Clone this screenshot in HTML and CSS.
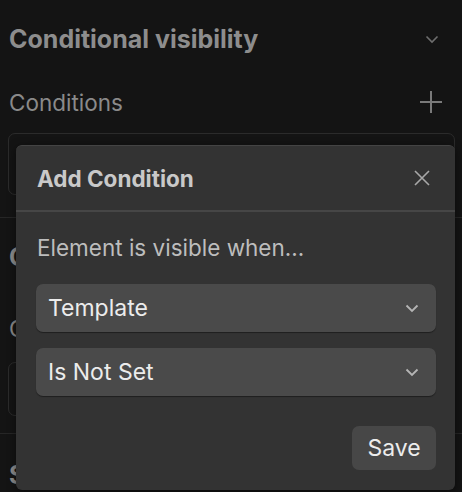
FILE: index.html
```html
<!DOCTYPE html>
<html>
<head>
<meta charset="utf-8">
<link rel="stylesheet" href="styles.css">
</head>
<body>
<div class="panel">
  <section class="section">
    <div class="section-head">
      <span class="section-title">Conditional visibility</span>
      <svg class="chev-head" width="14" height="9" viewBox="0 0 14 9"><path d="M1.5 1.5 L7 7 L12.5 1.5" fill="none" stroke="#6e6e6e" stroke-width="1.6"/></svg>
    </div>
    <div class="row-label">
      <span class="label">Conditions</span>
      <svg class="plus" width="24" height="24" viewBox="0 0 24 24"><path d="M12 1 V23 M1 12 H23" stroke="#7a7a7a" stroke-width="2" fill="none"/></svg>
    </div>
    <div class="box"></div>
  </section>
  <section class="section second">
    <div class="section-head"><span class="section-title">Custom attributes</span></div>
    <div class="row-label"><span class="label">Content</span></div>
    <div class="box"></div>
  </section>
  <section class="section third">
    <div class="section-head"><span class="section-title">Settings</span></div>
  </section>

  <div class="modal">
    <div class="modal-head">
      <span class="modal-title">Add Condition</span>
      <svg class="close" width="18" height="18" viewBox="0 0 18 18"><path d="M2 2 L16 16 M16 2 L2 16" stroke="#a8a8a8" stroke-width="1.6" fill="none"/></svg>
    </div>
    <div class="modal-body">
      <div class="hint">Element is visible when...</div>
      <div class="select"><span>Template</span><svg width="14" height="9" viewBox="0 0 14 9"><path d="M1.5 1.5 L7 7 L12.5 1.5" fill="none" stroke="#b5b5b5" stroke-width="1.8"/></svg></div>
      <div class="select"><span>Is Not Set</span><svg width="14" height="9" viewBox="0 0 14 9"><path d="M1.5 1.5 L7 7 L12.5 1.5" fill="none" stroke="#b5b5b5" stroke-width="1.8"/></svg></div>
      <div class="actions"><button class="save">Save</button></div>
    </div>
  </div>
</div>
</body>
</html>
```

FILE: styles.css
```css
html, body {
  margin: 0;
  padding: 0;
  background: #141414;
  font-family: Inter, "Noto Sans", sans-serif;
}
.panel {
  position: relative;
  width: 462px;
  height: 492px;
  overflow: hidden;
}
.section {
  border-bottom: 1px solid #262626;
  padding: 24px 7px 22px 9px;
}
.section-head {
  display: flex;
  align-items: center;
  justify-content: space-between;
  height: 30px;
}
.section-title {
  font-size: 25px;
  font-weight: 700;
  color: #8d8d8d;
}
.chev-head {
  margin-right: 16px;
}
.row-label {
  display: flex;
  align-items: center;
  justify-content: space-between;
  height: 30px;
  margin-top: 33px;
}
.label {
  font-size: 22.5px;
  color: #8a8a8a;
}
.plus {
  margin-right: 12px;
}
.box {
  margin-top: 16px;
  height: 60px;
  border: 1px solid #2b2b2b;
  border-radius: 7px;
  margin-left: -1px;
}
.second {
  padding-top: 24px;
  padding-bottom: 17px;
}
.second .row-label { margin-top: 41px; }
.second .box { height: 52px; margin-top: 19px; }
.third { border-bottom: none; padding-top: 26px; }

.modal {
  position: absolute;
  left: 16px;
  top: 145px;
  width: 439px;
  height: 345px;
  background: #333333;
  border-radius: 6px;
  border-top: 1px solid #444;
  box-sizing: border-box;
  box-shadow: 0 2px 8px rgba(0,0,0,0.5);
}
.modal-head {
  display: flex;
  align-items: center;
  justify-content: space-between;
  height: 64px;
  padding: 0 24px 0 21px;
  border-bottom: 2px solid #464646;
}
.modal-title {
  font-size: 22.5px;
  font-weight: 700;
  color: #c9c9c9;
}
.modal-body {
  padding: 22px 19px 0 20px;
}
.hint {
  font-size: 22.5px;
  color: #bdbdbd;
  line-height: 28px;
  margin-bottom: 22px;
  margin-left: 1px;
}
.select {
  display: flex;
  align-items: center;
  justify-content: space-between;
  height: 48px;
  box-sizing: border-box;
  background: #4a4a4a;
  border-radius: 7px;
  padding: 0 17px 0 12px;
  margin-bottom: 16px;
  box-shadow: 0 1px 1px rgba(0,0,0,0.4);
  font-size: 23px;
  color: #ececec;
}
.actions {
  display: flex;
  justify-content: flex-end;
  margin-top: 30px;
}
.save {
  font-family: Inter, "Noto Sans", sans-serif;
  font-size: 23px;
  color: #ececec;
  background: #474747;
  border: none;
  border-radius: 7px;
  width: 84px;
  height: 44px;
  padding: 0;
}
```
